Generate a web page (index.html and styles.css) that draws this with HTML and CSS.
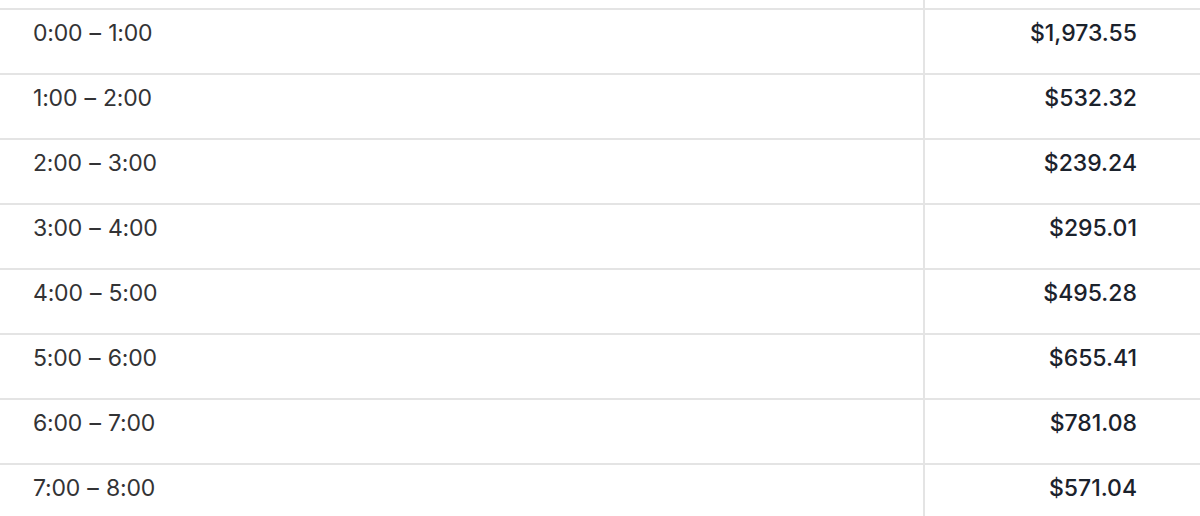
FILE: index.html
```html
<!DOCTYPE html>
<html>
<head>
<meta charset="utf-8">
<link rel="stylesheet" href="styles.css">
</head>
<body>
<div class="table">
  <div class="row spacer"><div class="cell time"></div><div class="cell amount"></div></div>
  <div class="row"><div class="cell time">0:00 – 1:00</div><div class="cell amount">$1,973.55</div></div>
  <div class="row"><div class="cell time">1:00 – 2:00</div><div class="cell amount">$532.32</div></div>
  <div class="row"><div class="cell time">2:00 – 3:00</div><div class="cell amount">$239.24</div></div>
  <div class="row"><div class="cell time">3:00 – 4:00</div><div class="cell amount">$295.01</div></div>
  <div class="row"><div class="cell time">4:00 – 5:00</div><div class="cell amount">$495.28</div></div>
  <div class="row"><div class="cell time">5:00 – 6:00</div><div class="cell amount">$655.41</div></div>
  <div class="row"><div class="cell time">6:00 – 7:00</div><div class="cell amount">$781.08</div></div>
  <div class="row"><div class="cell time">7:00 – 8:00</div><div class="cell amount">$571.04</div></div>
</div>
</body>
</html>
```
FILE: styles.css
```css
html, body {
  margin: 0;
  padding: 0;
  background: #ffffff;
}
body {
  font-family: Inter, "Noto Sans", "Liberation Sans", sans-serif;
  overflow: hidden;
  height: 516px;
}
.table {
  display: flex;
  flex-direction: column;
  width: 1200px;
}
.row {
  display: grid;
  grid-template-columns: 925px 1fr;
  height: 65px;
  box-sizing: border-box;
  border-top: 2px solid #e4e4e4;
}
.row.spacer {
  height: 8px;
  border-top: none;
}
.cell {
  box-sizing: border-box;
  font-size: 23px;
  line-height: 28px;
  padding-top: 9px;
}
.time {
  padding-left: 33px;
  color: #333335;
  font-weight: 400;
  word-spacing: 1px;
  letter-spacing: -0.2px;
  border-right: 2px solid #e4e4e4;
}
.amount {
  text-align: right;
  padding-right: 63px;
  color: #1b222c;
  font-weight: 500;
}
```
